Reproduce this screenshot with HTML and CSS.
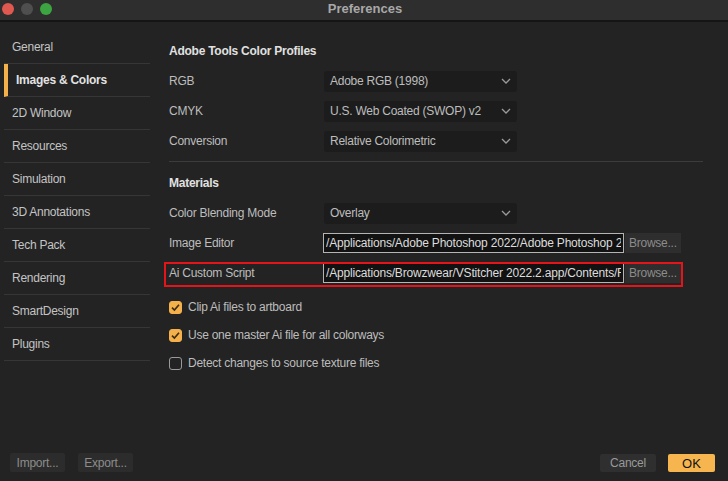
FILE: index.html
```html
<!DOCTYPE html>
<html>
<head>
<meta charset="utf-8">
<title>Preferences</title>
<link rel="stylesheet" href="styles.css">
</head>
<body>
<div class="window">
  <div class="titlebar">
    <div class="lights">
      <span class="light red"></span>
      <span class="light grey"></span>
      <span class="light green"></span>
    </div>
    <div class="title">Preferences</div>
  </div>
  <div class="content">
    <ul class="sidebar">
      <li class="nav">General</li>
      <li class="nav active">Images &amp; Colors</li>
      <li class="nav">2D Window</li>
      <li class="nav">Resources</li>
      <li class="nav">Simulation</li>
      <li class="nav">3D Annotations</li>
      <li class="nav">Tech Pack</li>
      <li class="nav">Rendering</li>
      <li class="nav">SmartDesign</li>
      <li class="nav">Plugins</li>
    </ul>
    <div class="main">
      <div class="section-title">Adobe Tools Color Profiles</div>
      <div class="row">
        <div class="label">RGB</div>
        <div class="select"><span>Adobe RGB (1998)</span><svg class="chev" width="10" height="6" viewBox="0 0 10 6"><polyline points="1,1 5,5 9,1" fill="none" stroke="#9a9a9a" stroke-width="1.3"/></svg></div>
      </div>
      <div class="row">
        <div class="label">CMYK</div>
        <div class="select"><span>U.S. Web Coated (SWOP) v2</span><svg class="chev" width="10" height="6" viewBox="0 0 10 6"><polyline points="1,1 5,5 9,1" fill="none" stroke="#9a9a9a" stroke-width="1.3"/></svg></div>
      </div>
      <div class="row">
        <div class="label">Conversion</div>
        <div class="select"><span>Relative Colorimetric</span><svg class="chev" width="10" height="6" viewBox="0 0 10 6"><polyline points="1,1 5,5 9,1" fill="none" stroke="#9a9a9a" stroke-width="1.3"/></svg></div>
      </div>
      <div class="divider"></div>
      <div class="section-title second">Materials</div>
      <div class="row">
        <div class="label">Color Blending Mode</div>
        <div class="select"><span>Overlay</span><svg class="chev" width="10" height="6" viewBox="0 0 10 6"><polyline points="1,1 5,5 9,1" fill="none" stroke="#9a9a9a" stroke-width="1.3"/></svg></div>
      </div>
      <div class="row">
        <div class="label">Image Editor</div>
        <div class="path"><span class="path-text">/Applications/Adobe Photoshop 2022/Adobe Photoshop 2022.app</span></div>
        <div class="browse">Browse...</div>
      </div>
      <div class="row highlighted">
        <div class="label">Ai Custom Script</div>
        <div class="path"><span class="path-text">/Applications/Browzwear/VStitcher 2022.2.app/Contents/Resources</span></div>
        <div class="browse">Browse...</div>
      </div>
      <div class="checks">
        <div class="check-row">
          <span class="box checked"><svg width="11" height="11" viewBox="0 0 11 11"><polyline points="2,5.6 4.4,8 9,2.8" fill="none" stroke="#3b2a0d" stroke-width="1.6"/></svg></span>
          <span class="check-label">Clip Ai files to artboard</span>
        </div>
        <div class="check-row">
          <span class="box checked"><svg width="11" height="11" viewBox="0 0 11 11"><polyline points="2,5.6 4.4,8 9,2.8" fill="none" stroke="#3b2a0d" stroke-width="1.6"/></svg></span>
          <span class="check-label">Use one master Ai file for all colorways</span>
        </div>
        <div class="check-row">
          <span class="box"></span>
          <span class="check-label">Detect changes to source texture files</span>
        </div>
      </div>
    </div>
  </div>
  <div class="footer">
    <div class="group">
      <button class="btn">Import...</button>
      <button class="btn">Export...</button>
    </div>
    <div class="group right">
      <button class="btn cancel">Cancel</button>
      <button class="btn ok">OK</button>
    </div>
  </div>
</div>
</body>
</html>
```

FILE: styles.css
```css
* { box-sizing: border-box; }
html, body {
  margin: 0;
  padding: 0;
  background: #232323;
}
body {
  font-family: "Liberation Sans", Arial, sans-serif;
  font-size: 12px;
  letter-spacing: -0.25px;
  color: #c0c0c0;
}
.window {
  width: 728px;
  height: 481px;
  display: flex;
  flex-direction: column;
  background: #232323;
  overflow: hidden;
}
.titlebar {
  height: 22px;
  background: #2e2e2e;
  border-bottom: 2px solid #151515;
  display: flex;
  align-items: center;
  padding-bottom: 3px;
}
.lights {
  display: flex;
  gap: 7px;
  padding-left: 2px;
  padding-top: 1px;
}
.light {
  width: 12px;
  height: 12px;
  border-radius: 50%;
  display: block;
}
.light.red { background: #e0584f; }
.light.grey { background: #4f4f4f; }
.light.green { background: #3ca440; }
.title {
  flex: 1;
  text-align: center;
  font-weight: bold;
  font-size: 13px;
  letter-spacing: 0;
  color: #a8a8a8;
  margin-right: 50px;
}
.content {
  flex: 1;
  display: flex;
}
.sidebar {
  list-style: none;
  margin: 0;
  padding: 9px 0 0 4px;
  width: 150px;
}
.nav {
  height: 33px;
  border-bottom: 1px solid #363636;
  display: flex;
  align-items: center;
  padding-left: 8px;
  color: #c4c4c4;
}
.nav.active {
  border-left: 4px solid #f3b04b;
  font-weight: bold;
  color: #e2e2e2;
}
.main {
  flex: 1;
  padding: 19px 25px 0 19px;
  display: flex;
  flex-direction: column;
}
.section-title {
  height: 20px;
  display: flex;
  align-items: center;
  font-weight: bold;
  color: #e0e0e0;
  margin-bottom: 5px;
}
.section-title.second {
  margin-top: 11px;
}
.row {
  height: 30px;
  display: flex;
  align-items: center;
  position: relative;
}
.label {
  width: 155px;
  flex: none;
  color: #bdbdbd;
}
.select {
  width: 193px;
  height: 21px;
  background: #1c1c1c;
  border-radius: 3px;
  display: flex;
  align-items: center;
  justify-content: space-between;
  padding: 0 6px 0 6px;
  color: #bdbdbd;
}
.divider {
  height: 1px;
  background: #3c3c3c;
  margin-top: 5px;
}
.path {
  width: 301px;
  height: 20px;
  margin-left: -1px;
  background: #121212;
  border: 1px solid #b4b4b4;
  color: #dcdcdc;
  padding: 0 2px;
  overflow: hidden;
  display: flex;
  align-items: center;
  flex: none;
}
.path-text {
  white-space: nowrap;
  display: block;
  max-width: 100%;
  overflow: hidden;
  letter-spacing: -0.18px;
}
.browse {
  width: 56px;
  height: 20px;
  margin-left: 1px;
  background: #2e2e2e;
  color: #8c8c8c;
  display: flex;
  align-items: center;
  padding-left: 4px;
  flex: none;
}
.highlighted::after {
  content: "";
  position: absolute;
  left: -5px;
  right: 20px;
  top: 4px;
  bottom: 1px;
  border: 2px solid #e4141b;
  pointer-events: none;
}
.checks {
  margin-top: 5px;
  display: flex;
  flex-direction: column;
}
.check-row {
  height: 28px;
  display: flex;
  align-items: center;
  gap: 6px;
}
.box {
  width: 13px;
  height: 13px;
  border-radius: 3px;
  border: 1px solid #9a9a9a;
  display: flex;
  align-items: center;
  justify-content: center;
  flex: none;
}
.box.checked {
  background: #f3b04b;
  border-color: #f3b04b;
}
.check-label { color: #bdbdbd; }
.footer {
  height: 40px;
  display: flex;
  justify-content: space-between;
  align-items: flex-start;
  padding: 12px 13px 0 10px;
}
.group {
  display: flex;
  gap: 13px;
}
.group.right { gap: 12px; padding-top: 1px; }
.btn {
  font-family: "Liberation Sans", Arial, sans-serif;
  font-size: 12px;
  letter-spacing: -0.25px;
  height: 19px;
  width: 55px;
  border: none;
  border-radius: 2px;
  background: #2c2c2c;
  color: #8c8c8c;
  padding: 0;
}
.btn.cancel {
  width: 56px;
  height: 18px;
  background: #2f2f2f;
  color: #999;
}
.btn.ok {
  width: 47px;
  height: 18px;
  background: #f7b54f;
  color: #111;
  font-size: 13px;
  letter-spacing: 0;
}
```
